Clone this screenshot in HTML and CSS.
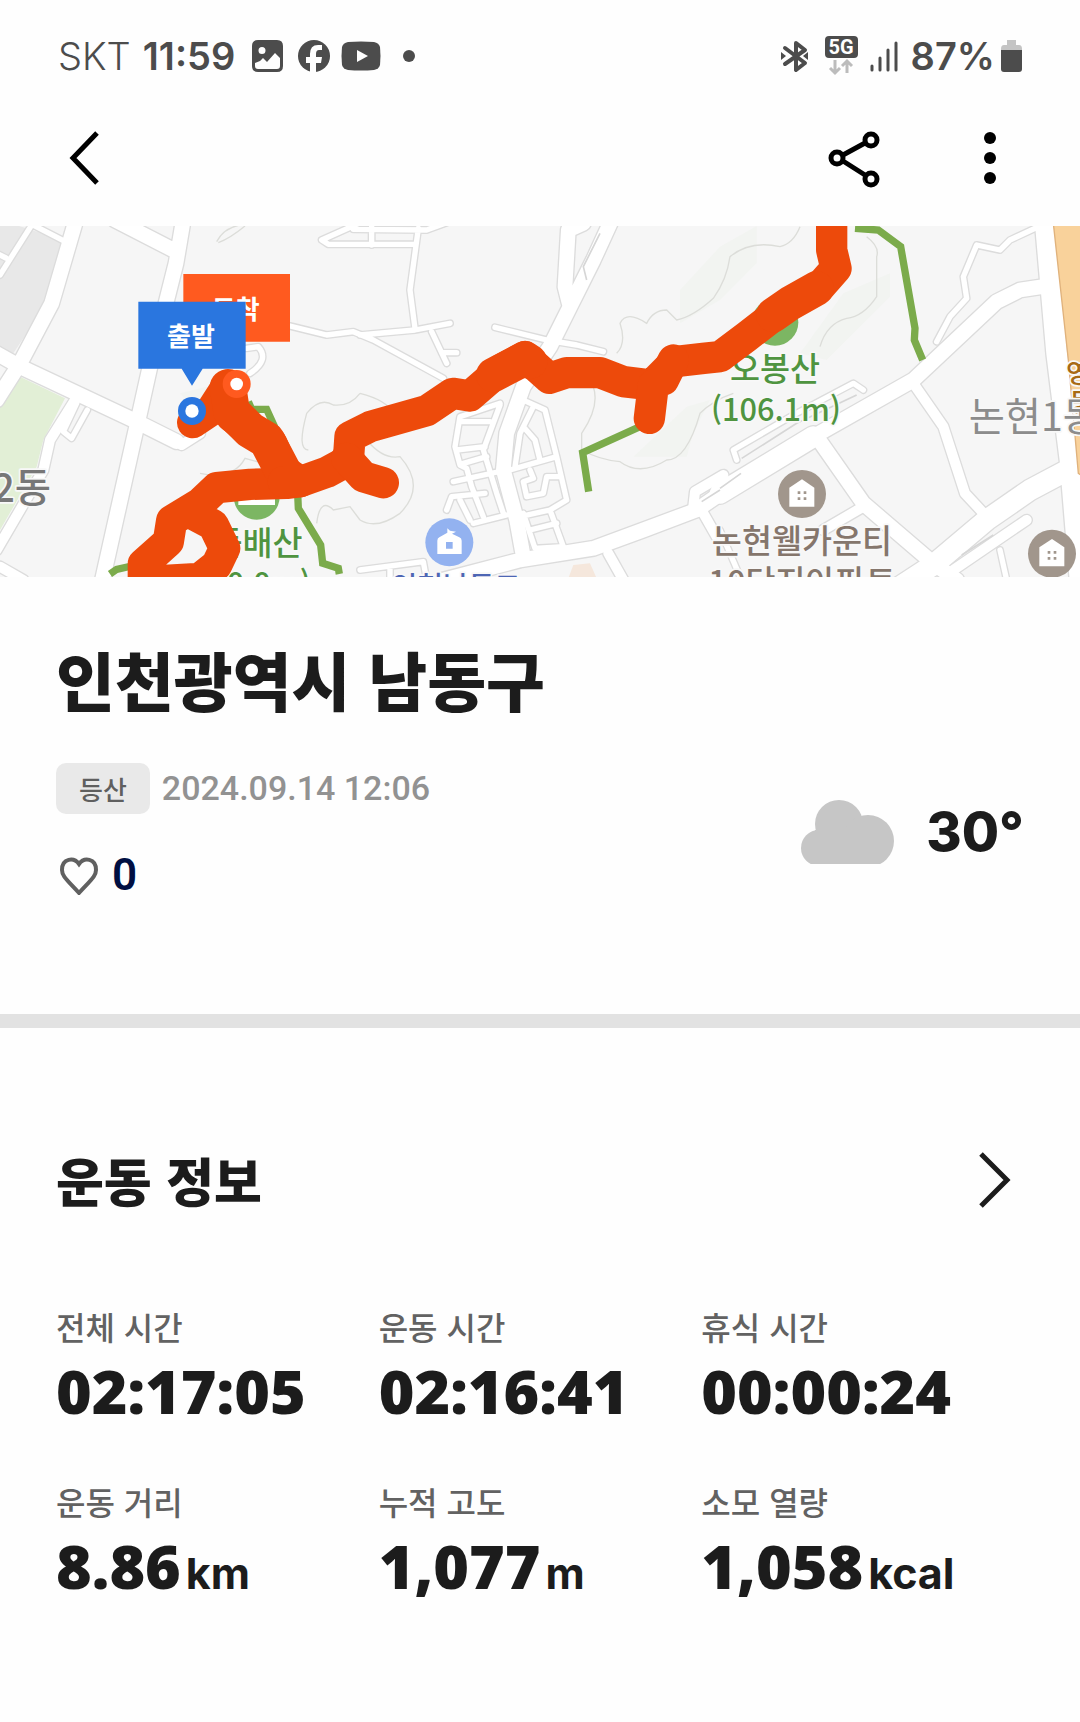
FILE: index.html
```html
<!DOCTYPE html>
<html lang="ko">
<head>
<meta charset="utf-8">
<meta name="viewport" content="width=device-width, initial-scale=1">
<title>운동 기록</title>
<link rel="stylesheet" href="styles.css">
</head>
<body>
<div class="status">
  <div class="status__group">
    <span class="status__carrier">SKT</span>
    <span class="status__time">11:59</span>
    <svg class="status__apps" width="166" height="36" viewBox="0 0 166 36" aria-hidden="true">
      <path fill="#4c4c4c" fill-rule="evenodd" d="M6 2H25Q31 2 31 8V28Q31 34 25 34H6Q0 34 0 28V8Q0 2 6 2ZM10 9A3.500 3.500 0 1 0 10 16A3.500 3.500 0 1 0 10 9ZM3 25V28Q3 31 6 31H25Q28 31 28 28V20L23 15L15 24L11 20L8 23Z"/>
      <circle cx="62" cy="18" r="16" fill="#4c4c4c"/>
      <path fill="#fefefe" d="M58 35V25H54V19H58V16Q58 7 66 7H70V12H67Q64 12 64 16V19H70L69 25H64V35Z"/>
      <path fill="#4c4c4c" d="M96 4Q109 3 122 4Q127 5 128 9Q129 18 128 27Q127 31 122 32Q109 33 96 32Q91 31 90 27Q89 18 90 9Q91 5 96 4Z"/>
      <path fill="#fefefe" d="M105 12L116 18L105 24Z"/>
      <circle cx="157" cy="18" r="6" fill="#4c4c4c"/>
    </svg>
  </div>
  <div class="status__group status__group--end">
    <svg width="118" height="40" viewBox="0 0 118 40" aria-hidden="true">
      <g fill="none" stroke="#4c4c4c" stroke-width="4" stroke-linejoin="round" stroke-linecap="round"><path d="M4 12L24 27L15 34V7L24 14L4 28"/></g>
      <path fill="#4c4c4c" d="M0 16L5 20L0 24ZM27 16L22 20L27 24Z"/>
      <rect x="44" y="0" width="33" height="22" rx="4" fill="#4c4c4c"/>
      <text class="status__net" x="60" y="18" text-anchor="middle">5G</text>
      <path fill="none" stroke="#bcbcbc" stroke-width="3" d="M54 24V36M49 32L54 37L59 32M66 37V25M61 30L66 25L71 30"/>
      <path fill="none" stroke="#4c4c4c" stroke-width="3" stroke-linecap="round" d="M91 30V34M99 22V34M107 14V34M115 7V34"/>
    </svg>
    <span class="status__battery"><span class="status__time">87%</span>
    <svg width="21" height="32" viewBox="0 0 21 32" aria-hidden="true">
      <path fill="#c4c4c4" d="M6 0H15V5H18Q21 5 21 9V12H0V9Q0 5 3 5H6Z"/><path fill="#4c4c4c" d="M0 10H21V29Q21 32 18 32H3Q0 32 0 29Z"/>
    </svg></span>
  </div>
</div>

<header class="toolbar">
  <button class="icon-button" type="button" aria-label="뒤로">
    <svg width="60" height="60" viewBox="0 0 60 60"><path d="M41 5L17 30L41 55" fill="none" stroke="#000" stroke-width="5"/></svg>
  </button>
  <div class="toolbar__actions">
    <button class="icon-button" type="button" aria-label="공유">
      <svg width="60" height="60" viewBox="0 0 60 60"><g fill="none" stroke="#000" stroke-width="5"><path d="M19 27L41 15M19 33L41 47"/><circle cx="13" cy="30" r="6"/><circle cx="47" cy="12" r="6"/><circle cx="47" cy="51" r="6"/></g></svg>
    </button>
    <button class="icon-button" type="button" aria-label="더보기">
      <svg width="60" height="60" viewBox="0 0 60 60"><circle cx="30" cy="10" r="6"/><circle cx="30" cy="30" r="6"/><circle cx="30" cy="50" r="6"/></svg>
    </button>
  </div>
</header>

<main>
<svg class="map" viewBox="0 18 3240 1053" role="img" aria-label="운동 경로 지도">
  <defs>
    <g id="roads" fill="none" stroke-linejoin="round" stroke-linecap="round">
      <g class="lane">
        <path d="M70 0L190 62M95 15L0 165M-10 100L18 114M230 550L190 635L215 655L262 570M1110 -5L965 60L985 73H1245M1115 20V75M1060 28L1280 30L1340 8M1255 25L1230 210L1245 325M1080 345L1245 330L1350 310M1295 335L1340 430M1325 398H1370M870 318L980 345L1060 335L1120 360L1330 475M740 385L775 380Q810 420 750 460M1485 322L1640 360L1730 375L1810 395"/>
        <path d="M1500 550L1380 590L1365 680L1380 735L1400 745L1415 800L1450 890M1380 605H1470M1370 690L1455 680M1380 733L1460 710M1360 785L1520 750M1500 555L1450 690L1490 820L1510 880M1340 870L1355 830L1455 820M1380 840L1410 900M1420 910L1520 885"/>
        <path d="M1580 545L1635 570L1670 710L1700 840L1650 870L1560 890M1600 560L1560 640L1545 740M1570 620L1605 660L1620 720M1530 750L1670 710M1590 750L1600 775L1570 785L1580 830L1630 820L1640 770L1680 770M1570 880L1605 985L1690 980M1650 870L1690 980M1590 930L1670 910M1080 1050L1270 1025L1280 1080M1170 1040V1080"/>
        <path d="M3105 25L3030 60L3000 90L2930 75L2890 170L2900 235L2850 290L2810 365M2210 720L2200 690L2380 585L2560 490L2590 510M3000 990L3020 1080M2160 930L2220 1070"/>
      </g>
      <g class="street">
        <path d="M225 540L150 660L130 750L-10 990M0 1040L70 1080M2080 860L2085 815L2170 765M2110 880L2150 950M1825 1000L1870 1080M2590 860L2470 930M3080 900L2860 1050M2740 490L2830 620L2895 820L2960 890M530 665L545 675L600 640"/>
      </g>
      <g class="avenue">
        <path d="M228 0L155 250L60 430L-10 540M-20 395L60 440L410 605L530 665M550 0L528 130L450 440L410 620L305 1090M345 0L520 90M1750 10L1705 30L1695 200L1710 260M1835 0L1780 120L1710 260L1650 380L1570 500L1520 640L1510 750L1550 900L1570 1010M1330 1080L1560 1020L1780 985L1930 930L2090 870L2170 815L2440 650L2740 480L2990 245L3060 210L3140 198M2450 650L2590 850L2800 1030L2870 1080"/>
      </g>
      <g class="highway">
        <path d="M2160 820L2440 650M3135 0L3170 400L3210 720L3240 1080M3260 720L3090 810L2960 900L2800 1035L2700 1100"/>
      </g>
    </g>
  </defs>
  <rect y="18" width="3240" height="1053" fill="#f6f6f6"/>
  <path fill="#e8e8e8" d="M0 0L190 60L140 250L40 400L0 385Z"/>
  <path fill="#e2efd6" d="M60 470L195 535L130 660L110 740L0 930V560Z"/>
  <path fill="#f2f4f1" d="M2530 220L2670 160V230L2480 420L2400 400ZM2160 80L2040 210V310L2160 240L2270 130V18ZM1900 710L2060 560L2130 540L2080 640L2060 710ZM540 520L620 500L700 600L620 620Z"/>
  <g fill="none" stroke="#dcddd9" stroke-width="4">
    <path d="M650 65Q670 25 720 15M655 68Q690 55 735 18M925 690Q890 690 920 580Q960 530 1000 555Q1050 560 1080 520M600 760Q700 780 735 715L790 730M950 910Q960 830 1000 870L1050 860L1080 900M1080 520Q1160 540 1180 580M1100 660Q1150 720 1200 710Q1280 800 1200 880Q1130 930 1080 900"/>
    <path d="M1850 400Q1880 370 1860 310Q1880 270 1940 310Q1960 270 2000 270L2030 300Q2080 290 2140 235Q2180 180 2190 110Q2250 60 2340 80Q2380 70 2400 20M2600 50Q2640 80 2630 110V230Q2590 290 2540 295Q2480 310 2460 380M1780 500Q1800 560 1745 640V690Q1800 720 1860 725Q1920 770 2000 720Q2060 720 2100 580Q2140 540 2200 520"/>
  </g>
  <use href="#roads" class="roads roads--edge"/>
  <use href="#roads" class="roads"/>
  <path fill="none" stroke="#d6d6d6" stroke-width="5" d="M2225 715L2390 610L2570 525M2160 805L2223 760M2885 1005L2980 945M1760 180L1750 140L1800 40M2105 845L2160 810"/>
  <path fill="#f9d29b" stroke="#e0b27c" stroke-width="4" d="M3160 10H3250V770L3235 760L3205 420Z"/>
  <path fill="#f5e7dc" d="M1720 1035L1770 1030L1790 1075H1705Z"/>

  <g fill="none" stroke="#7bab4b" stroke-width="22">
    <path d="M745 545L755 568H800L860 700M893 820L895 865L962 975L968 1030L1015 1045L1018 1062M330 1062L350 1048L395 1038M1920 620L1748 698L1766 815M2565 25L2635 30L2702 80L2745 325L2743 360L2768 420"/>
  </g>
  <circle cx="2325" cy="307" r="70" fill="#7cb663"/>
  <circle cx="770" cy="830" r="69" fill="#7cb663"/>
  <path d="M715 780H825V855H715Z" fill="#fff"/>

  <g class="label label--peak">
    <text x="2325" y="483" text-anchor="middle">오봉산</text>
    <text class="label--height" x="2328" y="604" text-anchor="middle">(106.1m)</text>
    <text x="908" y="1005" text-anchor="end">듬배산</text>
    <text class="label--height" x="932" y="1124" text-anchor="end">(80.0m)</text>
  </g>
  <g class="label label--place">
    <text x="2406" y="1000" text-anchor="middle">논현웰카운티</text>
    <text x="2406" y="1122" text-anchor="middle">10단지아파트</text>
  </g>
  <text class="label label--school" x="1368" y="1132" text-anchor="middle">인천남동고</text>
  <text class="label label--district" x="153" y="846" text-anchor="end">2동</text>
  <g class="label label--road"><text x="3198" y="490">영</text><text x="3208" y="575">동</text></g>
  <text class="label label--district label--pale" x="2906" y="632">논현1동</text>

  <g fill="none" stroke="#ed4a0b" stroke-width="94" stroke-linecap="round" stroke-linejoin="round">
    <path d="M578 608L635 570L680 500L695 590L760 640L815 670L850 750L900 785L860 790L750 793L650 803L600 850L515 902L505 965L430 1032V1085L600 1075L650 1035L674 985L640 915L575 880"/>
    <path stroke-width="110" d="M684 502L695 575L750 630L800 660L850 755"/>
    <path d="M850 785L900 785L980 757L1045 722L1050 650L1110 620L1280 572L1358 520L1410 528L1500 450L1575 410L1648 475L1700 458H1800L1870 485L1955 495L2025 425L2110 415L2160 410L2240 350L2370 250L2460 200L2508 145L2495 90V-20"/>
    <path d="M1040 715L1090 770L1150 788M1960 495L1948 595M2020 420L1990 480"/>
    <path stroke-width="104" d="M2320 285L2370 250L2450 205M1480 465L1575 415L1590 425"/>
  </g>

  <path fill="#ff5a1f" d="M550 162H870V365H550Z"/>
  <text class="pin" x="707" y="297" text-anchor="middle">도착</text>
  <path fill="#2a76df" d="M415 245H737V446H608L576 497L545 446H415Z"/>
  <text class="pin" x="573" y="379" text-anchor="middle">출발</text>
  <circle cx="710" cy="492" r="42" fill="#ff5a1f"/><circle cx="710" cy="492" r="19" fill="#fff"/>
  <circle cx="576" cy="573" r="42" fill="#2a76df"/><circle cx="576" cy="573" r="20" fill="#fff"/>

  <circle cx="1348" cy="967" r="72" fill="#93b2f0"/>
  <path fill="#fff" fill-rule="evenodd" d="M1312 962Q1312 955 1318 952L1342 938V925L1350 932L1368 935L1356 941L1378 952Q1385 955 1385 962V1002H1312ZM1338 966V986H1358V966Z"/>
  <g id="house">
    <circle cx="2406" cy="822" r="72" fill="#a1968c"/>
    <path fill="#fff" d="M2368 803L2406 778L2443 803V860H2368Z"/>
    <path fill="#a1968c" d="M2393 814h8v8h-8zM2411 814h8v8h-8zM2393 832h8v8h-8zM2411 832h8v8h-8z"/>
  </g>
  <use href="#house" x="750" y="179"/>
</svg>

<section class="summary">
  <h1 class="summary__title">인천광역시 남동구</h1>
  <div class="summary__row">
    <div class="summary__meta">
      <div class="summary__when"><span class="chip">등산</span><time class="date" datetime="2024-09-14T12:06">2024.09.14 12:06</time></div>
      <button class="like" type="button" aria-label="좋아요">
        <svg width="38" height="38" viewBox="0 0 38 38"><path d="M19 7C14 0 2 1 2 13C2 19 6 22 19 36C32 22 36 19 36 13C36 1 24 0 19 7Z" fill="none" stroke="#606060" stroke-width="4"/></svg>
        <span>0</span>
      </button>
    </div>
    <div class="weather">
      <svg width="93" height="64" viewBox="0 0 93 64" role="img" aria-label="흐림"><g fill="#c6c6c6"><circle cx="18" cy="48" r="18"/><circle cx="38" cy="24" r="24"/><circle cx="67" cy="41" r="26"/><path d="M14 30H70V64H14Z"/></g></svg>
      <span class="weather__temp">30°</span>
    </div>
  </div>
</section>

<section class="workout">
  <div class="workout__head">
    <h2 class="workout__title">운동 정보</h2>
    <button class="icon-button" type="button" aria-label="운동 정보 더보기">
      <svg width="60" height="60" viewBox="0 0 60 60"><path d="M17 4L43 30L17 56" fill="none" stroke="#1c1c1c" stroke-width="5"/></svg>
    </button>
  </div>
  <dl class="stats">
    <div><dt>전체 시간</dt><dd>02:17:05</dd></div>
    <div><dt>운동 시간</dt><dd>02:16:41</dd></div>
    <div><dt>휴식 시간</dt><dd>00:00:24</dd></div>
    <div><dt>운동 거리</dt><dd>8.86<span class="unit">km</span></dd></div>
    <div><dt>누적 고도</dt><dd>1,077<span class="unit">m</span></dd></div>
    <div><dt>소모 열량</dt><dd>1,058<span class="unit">kcal</span></dd></div>
  </dl>
</section>
</main>
</body>
</html>
```
FILE: styles.css
```css
* { box-sizing: border-box; }
body {
  margin: 0;
  background: #fefefe;
  color: #1c1c1c;
  font-family: "Noto Sans CJK KR", sans-serif;
}
button { border: 0; padding: 0; background: none; color: inherit; cursor: pointer; }
svg { display: block; }
h1, h2, dl, dd { margin: 0; }

.status {
  display: flex;
  justify-content: space-between;
  align-items: center;
  height: 112px;
  padding: 0 58px;
  color: #4c4c4c;
  font: 38px/48px Inter, sans-serif;
}
.status__group { display: flex; align-items: center; gap: 12px; }
.status__battery { display: flex; align-items: center; gap: 6px; }
.status__carrier { font-weight: 300; }
.status__time { font-weight: 600; }
.status__apps { margin-left: 5px; }
.status__net { font: 700 20px Roboto, sans-serif; fill: #fff; }

.toolbar {
  display: flex;
  justify-content: space-between;
  align-items: center;
  height: 114px;
  padding: 0 60px 22px 56px;
}
.toolbar__actions { display: flex; gap: 76px; }
.icon-button { display: block; }

.map { width: 100%; height: auto; }
.lane path { stroke-width: calc(16px + var(--edge)); }
.street path { stroke-width: calc(30px + var(--edge)); }
.avenue path { stroke-width: calc(44px + var(--edge)); }
.highway path { stroke-width: calc(62px + var(--edge)); }
.roads { --edge: 0px; stroke: #fff; }
.roads--edge { --edge: 8px; stroke: #dcdcdc; }
.label {
  font-weight: 500;
  font-size: 98px;
  paint-order: stroke;
  stroke: #f8f8f8;
  stroke-width: 10px;
  stroke-linejoin: round;
}
.label--peak { fill: #4f9440; }
.label--height { font-size: 92px; }
.label--place { fill: #85766c; }
.label--school { fill: #4d66b4; font-size: 84px; }
.label--road { fill: #a86a14; font-size: 80px; }
.label--district { fill: #777; font-size: 118px; }
.label--pale { fill: #8c8c8c; font-weight: 400; }
.pin { fill: #fff; font-size: 78px; font-weight: 700; }

.summary { padding: 53px 56px 113px; border-bottom: 14px solid #e2e2e2; }
.summary__title { font-size: 64px; line-height: 96px; font-weight: 900; }
.summary__row { display: flex; justify-content: space-between; align-items: center; padding-top: 37px; }
.summary__when { display: flex; align-items: center; gap: 12px; }
.chip {
  padding: 0 23px;
  border-radius: 10px;
  background: #e9e9e9;
  color: #5f5f5f;
  font-size: 26px;
  line-height: 51px;
  font-weight: 500;
}
.date { color: #929292; font: 500 34px/51px Roboto, sans-serif; }
.like {
  display: flex;
  align-items: center;
  gap: 14px;
  margin-top: 36px;
  padding-left: 4px;
  color: #000f42;
  font: 600 44px/51px Roboto, sans-serif;
}
.weather { display: flex; align-items: center; gap: 32px; }
.weather__temp { font: 800 54px/64px Inter, sans-serif; }

.workout { padding: 107px 56px 96px; }
.workout__head { display: flex; justify-content: space-between; align-items: center; height: 90px; }
.workout__title { font-size: 52px; line-height: 90px; font-weight: 900; }
.stats {
  display: grid;
  grid-template-columns: repeat(3, 1fr);
  row-gap: 45px;
  padding-top: 72px;
}
.stats dt { color: #626262; font-size: 32px; line-height: 58px; font-weight: 500; }
.stats dd {
  display: flex;
  align-items: baseline;
  gap: 5px;
  font: 800 61px/72px "Open Sans", sans-serif;
}
.unit { font: 700 43px/72px Inter, sans-serif; }
```
